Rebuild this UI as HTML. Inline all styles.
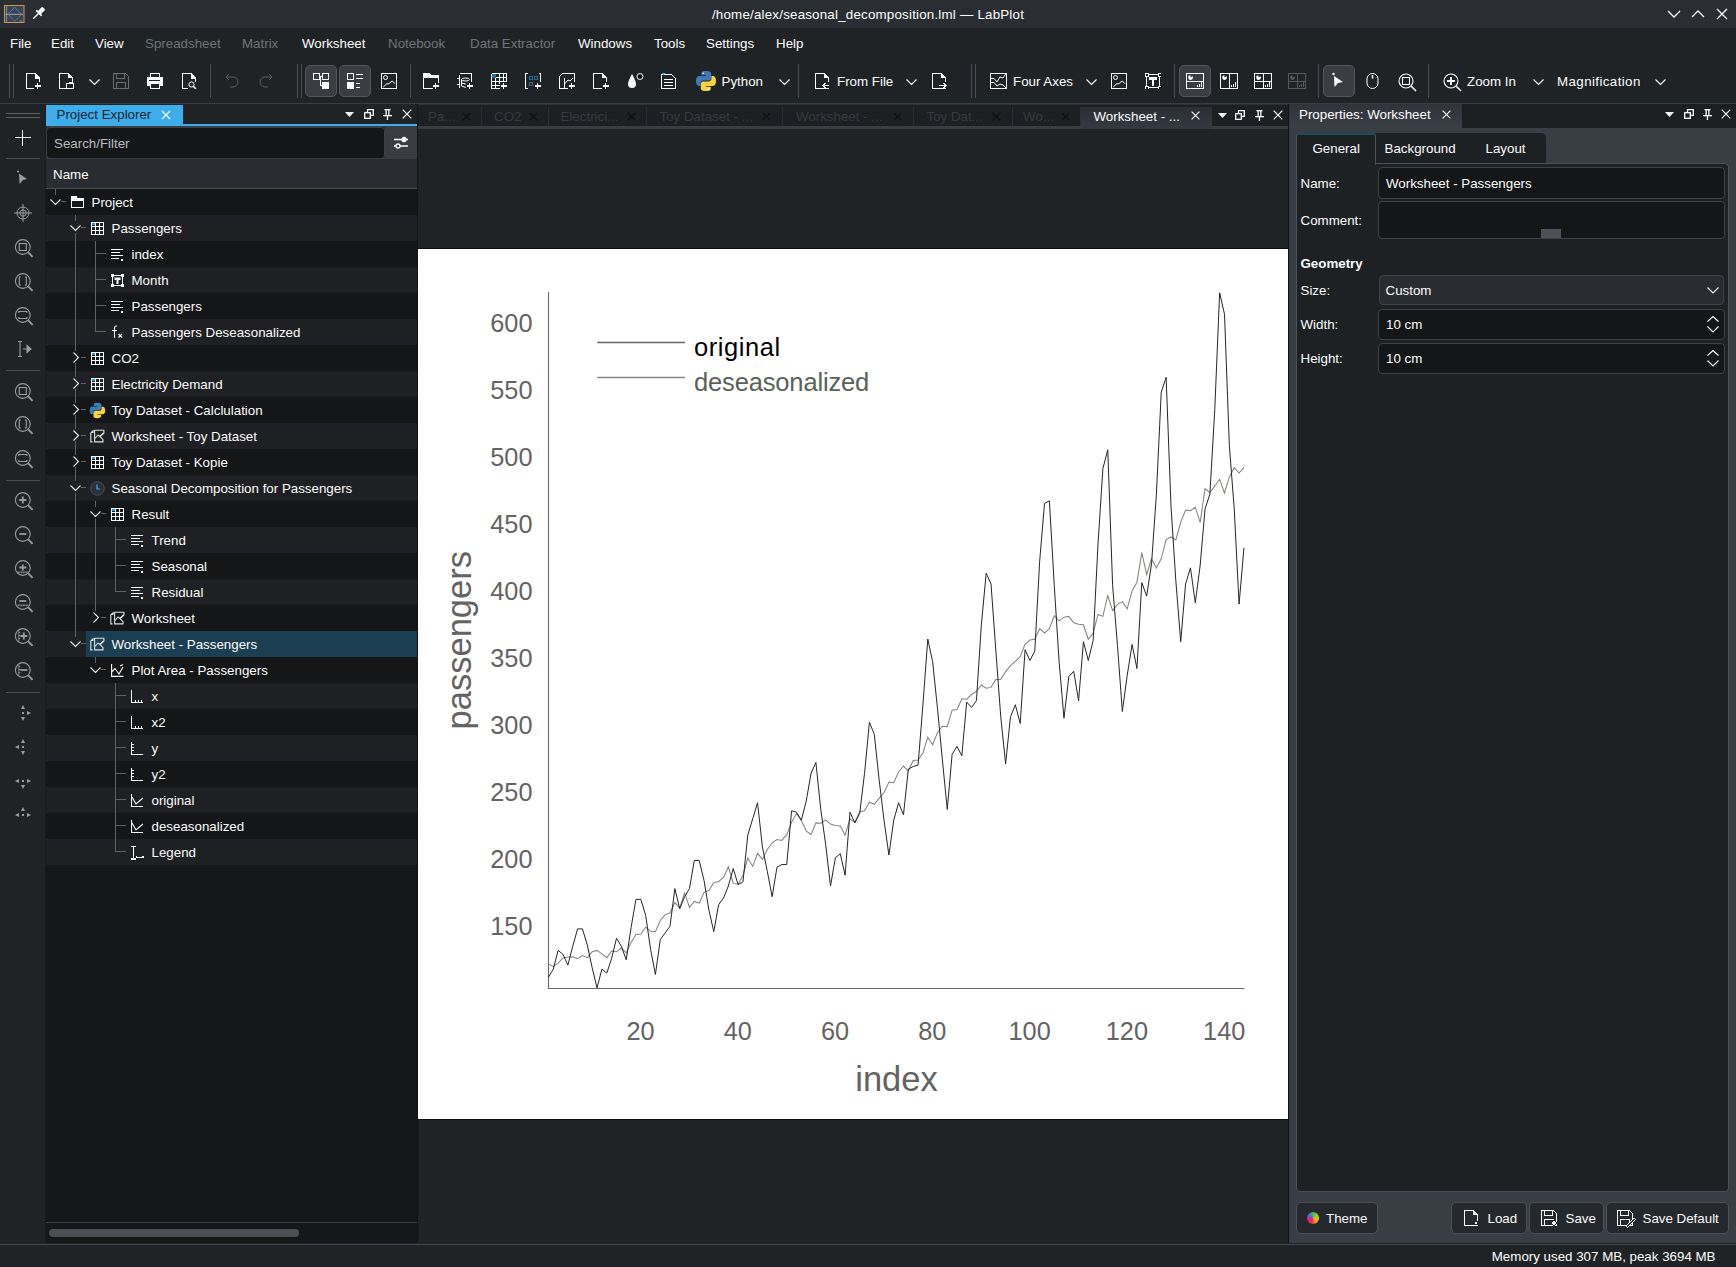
<!DOCTYPE html>
<html><head><meta charset="utf-8"><style>
html,body{margin:0;padding:0;}
body{width:1736px;height:1267px;position:relative;overflow:hidden;background:#202326;font-family:'Liberation Sans', sans-serif;}
body>div{position:absolute;}
.t{white-space:nowrap;line-height:1;}
</style></head><body>
<div style="left:0px;top:0px;width:1736px;height:28px;background:#2a2e32;"></div>
<svg style="position:absolute;left:4px;top:5px;" width="21" height="18" viewBox="0 0 21 18"><rect x="0.5" y="0.5" width="19.5" height="17" fill="#3b4350" stroke="#c9974f" stroke-width="1"/><path d="M2.6 1.2 V16.8" stroke="#a0a8b0" stroke-width="0.8"/><path d="M1.5 9.3 H19" stroke="#aab2ba" stroke-width="0.9"/><path d="M4 9.3 L10.7 2.2 L17.5 9.3" fill="none" stroke="#3f92d2" stroke-width="0.8"/><path d="M4 9.3 L10.7 16.2 L17.5 9.3" fill="none" stroke="#6f7882" stroke-width="0.8"/><path d="M15.5 16 H18.5" stroke="#3f92d2" stroke-width="1"/></svg>
<svg style="position:absolute;left:31px;top:6px;" width="15" height="15" viewBox="0 0 15 15"><g transform="rotate(45 7.5 7.5)" fill="#fcfcfc"><rect x="5.3" y="0" width="4.4" height="6.5" rx="0.8"/><rect x="3.6" y="6" width="7.8" height="1.8" rx="0.5"/><rect x="6.8" y="7.5" width="1.4" height="7.5"/></g></svg>
<div class="t" style="left:368.00px;width:1000px;text-align:center;top:7.92px;font-size:13.33px;color:#fcfcfc;font-weight:normal;letter-spacing:0.21px;">/home/alex/seasonal_decomposition.lml — LabPlot</div>
<svg style="position:absolute;left:1667px;top:8px;" width="14" height="12" viewBox="0 0 14 12"><path d="M1 3 L7 9 L13 3" fill="none" stroke="#fcfcfc" stroke-width="1.3"/></svg>
<svg style="position:absolute;left:1691px;top:8px;" width="14" height="12" viewBox="0 0 14 12"><path d="M1 9 L7 3 L13 9" fill="none" stroke="#fcfcfc" stroke-width="1.3"/></svg>
<svg style="position:absolute;left:1716px;top:8px;" width="12" height="12" viewBox="0 0 12 12"><path d="M1 1 L11 11 M11 1 L1 11" fill="none" stroke="#fcfcfc" stroke-width="1.3"/></svg>
<div style="left:0px;top:28px;width:1736px;height:30px;background:#202326;"></div>
<div class="t" style="left:10.00px;top:36.72px;font-size:13.33px;color:#fcfcfc;font-weight:normal;">File</div>
<div class="t" style="left:51.00px;top:36.72px;font-size:13.33px;color:#fcfcfc;font-weight:normal;">Edit</div>
<div class="t" style="left:95.00px;top:36.72px;font-size:13.33px;color:#fcfcfc;font-weight:normal;">View</div>
<div class="t" style="left:145.00px;top:36.72px;font-size:13.33px;color:#707376;font-weight:normal;">Spreadsheet</div>
<div class="t" style="left:242.00px;top:36.72px;font-size:13.33px;color:#707376;font-weight:normal;">Matrix</div>
<div class="t" style="left:302.00px;top:36.72px;font-size:13.33px;color:#fcfcfc;font-weight:normal;">Worksheet</div>
<div class="t" style="left:388.00px;top:36.72px;font-size:13.33px;color:#707376;font-weight:normal;">Notebook</div>
<div class="t" style="left:470.00px;top:36.72px;font-size:13.33px;color:#707376;font-weight:normal;">Data Extractor</div>
<div class="t" style="left:578.00px;top:36.72px;font-size:13.33px;color:#fcfcfc;font-weight:normal;">Windows</div>
<div class="t" style="left:654.00px;top:36.72px;font-size:13.33px;color:#fcfcfc;font-weight:normal;">Tools</div>
<div class="t" style="left:706.00px;top:36.72px;font-size:13.33px;color:#fcfcfc;font-weight:normal;">Settings</div>
<div class="t" style="left:776.00px;top:36.72px;font-size:13.33px;color:#fcfcfc;font-weight:normal;">Help</div>
<div style="left:0px;top:58px;width:1736px;height:45px;background:#202326;"></div>
<div style="left:0px;top:103px;width:1736px;height:1px;background:#3a3d41;"></div>
<div style="left:9px;top:64px;width:1px;height:34px;background:#4a4d51;"></div>
<div style="left:13px;top:64px;width:1px;height:34px;background:#4a4d51;"></div>
<svg style="position:absolute;left:25px;top:73px;" width="16" height="16" viewBox="0 0 16 16"><g fill="none" stroke="#fcfcfc" stroke-width="1" shape-rendering="crispEdges"><path d="M1.5 15.5 V0.5 H10 L14.5 5 V10 M1.5 15.5 H9"/><path d="M10 0 V5.5 H15 Z" fill="#fcfcfc" stroke="none"/><rect x="8.6" y="9.2" width="7.4" height="6.8" fill="#202326" stroke="none"/><path d="M9.5 13 H15.5 M12.5 10 V16" stroke-width="1.2"/></g></svg>
<svg style="position:absolute;left:59px;top:73px;" width="16" height="16" viewBox="0 0 16 16"><g fill="none" stroke="#fcfcfc" stroke-width="1" shape-rendering="crispEdges"><path d="M0.5 0.5 H9.5 L13.5 4.5 V15.5 H0.5 Z"/><path d="M9 0.5 H10 L14 4.5 V5 H9 Z" fill="#fcfcfc" stroke="none"/><rect x="7.5" y="10.5" width="7" height="5" fill="#202326"/><path d="M7.5 10.5 H10 L10.5 9.5 H12 V10.5 H14.5 V15.5 H7.5 Z"/></g></svg>
<svg style="position:absolute;left:89px;top:79px;" width="11" height="7" viewBox="0 0 11 7"><path d="M0.5 0.5 L5.5 5.5 L10.5 0.5" fill="none" stroke="#fcfcfc" stroke-width="1.1"/></svg>
<svg style="position:absolute;left:113px;top:73px;" width="16" height="16" viewBox="0 0 16 16"><g fill="none" stroke="#6a6d70" stroke-width="1" shape-rendering="crispEdges"><path d="M0.5 0.5 H12.5 L15.5 3.5 V15.5 H0.5 Z"/><rect x="3.5" y="0.5" width="8" height="5"/><rect x="3.5" y="9.5" width="9" height="6"/></g></svg>
<svg style="position:absolute;left:147px;top:73px;" width="16" height="16" viewBox="0 0 16 16"><g fill="none" stroke="#fcfcfc" stroke-width="1" shape-rendering="crispEdges"><rect x="3.5" y="0.5" width="9" height="4"/><path d="M0.5 4.5 H15.5 V12.5 H0.5 Z" fill="#fcfcfc"/><rect x="3.5" y="10.5" width="9" height="5" fill="#202326"/><path d="M2 7 H13" stroke="#202326"/></g></svg>
<svg style="position:absolute;left:181px;top:73px;" width="16" height="16" viewBox="0 0 16 16"><g fill="none" stroke="#fcfcfc" stroke-width="1" shape-rendering="crispEdges"><path d="M1.5 15.5 V0.5 H10 L14.5 5 V9 M1.5 15.5 H7"/><path d="M10 0 V5.5 H15 Z" fill="#fcfcfc" stroke="none"/><circle cx="10.5" cy="11.5" r="2.6" shape-rendering="auto"/><path d="M12.3 13.3 L15 16" stroke-width="1.4" shape-rendering="auto"/></g></svg>
<div style="left:210px;top:64px;width:1px;height:34px;background:#4a4d51;"></div>
<svg style="position:absolute;left:224px;top:73px;" width="16" height="16" viewBox="0 0 16 16"><path d="M2 4 L5 1 M2 4 L5 7 M2 4 H9 A5 5 0 0 1 9 14 H6" fill="none" stroke="#5a5d60" stroke-width="1"/></svg>
<svg style="position:absolute;left:258px;top:73px;" width="16" height="16" viewBox="0 0 16 16"><path d="M14 4 L11 1 M14 4 L11 7 M14 4 H7 A5 5 0 0 0 7 14 H10" fill="none" stroke="#5a5d60" stroke-width="1"/></svg>
<div style="left:297px;top:64px;width:1px;height:34px;background:#4a4d51;"></div>
<div style="left:301px;top:64px;width:1px;height:34px;background:#4a4d51;"></div>
<div style="left:305px;top:65px;width:32px;height:32px;background:#3a3d41;border:1px solid #54585c;border-radius:5px;box-sizing:border-box;"></div>
<svg style="position:absolute;left:313px;top:73px;" width="16" height="16" viewBox="0 0 16 16"><g fill="none" stroke="#fcfcfc" stroke-width="1" shape-rendering="crispEdges"><rect x="0.5" y="0.5" width="6" height="6"/><rect x="9.5" y="0.5" width="6" height="6"/><path d="M6.5 3.5 H9.5 M7.5 3.5 V12.5 H9.5"/><rect x="9" y="9" width="7" height="7" fill="#fcfcfc" stroke="none"/></g></svg>
<div style="left:339px;top:65px;width:32px;height:32px;background:#3a3d41;border:1px solid #54585c;border-radius:5px;box-sizing:border-box;"></div>
<svg style="position:absolute;left:347px;top:73px;" width="16" height="16" viewBox="0 0 16 16"><g fill="none" stroke="#fcfcfc" stroke-width="1" shape-rendering="crispEdges"><rect x="0.5" y="0.5" width="6" height="6"/><path d="M9 1.5 H16 M9 5.5 H16 M9 10.5 H13 M9 14.5 H13"/><rect x="0" y="9" width="7" height="7" fill="#fcfcfc" stroke="none"/></g></svg>
<svg style="position:absolute;left:381px;top:73px;" width="16" height="16" viewBox="0 0 16 16"><g fill="none" stroke="#fcfcfc" stroke-width="1" shape-rendering="crispEdges"><rect x="0.5" y="0.5" width="15" height="15"/><circle cx="4.5" cy="4.5" r="2" shape-rendering="auto"/><path d="M2.3 14 L6 10.5 L7 11.2 L11.3 8 L14 10.8" shape-rendering="auto"/></g></svg>
<div style="left:410px;top:64px;width:1px;height:34px;background:#4a4d51;"></div>
<svg style="position:absolute;left:423px;top:73px;" width="16" height="16" viewBox="0 0 16 16"><g fill="none" stroke="#fcfcfc" stroke-width="1" shape-rendering="crispEdges"><path d="M0.5 15.5 V0.5 H6 L8 2.5 H15.5 V10"/><path d="M0 0 H6 L8 2 H16 V5 H0 Z" fill="#fcfcfc" stroke="none"/><path d="M0.5 15.5 H10 M12.5 10 V16 M9.5 13 H15.5" stroke-width="1.2"/></g></svg>
<svg style="position:absolute;left:457px;top:73px;" width="16" height="16" viewBox="0 0 16 16"><g fill="none" stroke="#fcfcfc" stroke-width="1" shape-rendering="crispEdges"><path d="M2.5 1.5 V15 M2.5 0.5 H14.5 V9 M0 5 H2.5 M0 11 H2.5"/><ellipse cx="8.5" cy="6.5" rx="4" ry="1.5" shape-rendering="auto"/><path d="M4.5 6.5 V13 Q8.5 15 11 14 M4.5 10 Q8.5 12 12.5 10" shape-rendering="auto"/><rect x="8.6" y="9.2" width="7.4" height="6.8" fill="#202326" stroke="none"/><path d="M9.5 13 H15.5 M12.5 10 V16" stroke-width="1.2"/></g></svg>
<svg style="position:absolute;left:491px;top:73px;" width="16" height="16" viewBox="0 0 16 16"><g fill="none" stroke="#fcfcfc" stroke-width="1" shape-rendering="crispEdges"><path d="M0.5 0.5 H15.5 V9 M0.5 0.5 V15.5 H9 M4.5 0.5 V15.5 M8.5 0.5 V11 M12.5 0.5 V9 M0.5 4.5 H15.5 M0.5 8.5 H15.5 M0.5 12.5 H9"/><rect x="1" y="1" width="3.5" height="3.5" fill="#2e6a8f" stroke="none"/><rect x="8.6" y="9.2" width="7.4" height="6.8" fill="#202326" stroke="none"/><path d="M9.5 13 H15.5 M12.5 10 V16" stroke-width="1.2"/></g></svg>
<svg style="position:absolute;left:525px;top:73px;" width="16" height="16" viewBox="0 0 16 16"><g fill="none" stroke="#fcfcfc" stroke-width="1" shape-rendering="crispEdges"><path d="M2.5 0.5 H0.5 V15.5 H2.5 M13.5 0.5 H15.5 V9"/><rect x="4.5" y="3.5" width="3" height="3" stroke="#2e6a8f"/><rect x="9.5" y="3.5" width="3" height="3" stroke="#2e6a8f"/><rect x="4.5" y="9.5" width="3" height="3" stroke="#2e6a8f"/><rect x="8.6" y="9.2" width="7.4" height="6.8" fill="#202326" stroke="none"/><path d="M9.5 13 H15.5 M12.5 10 V16" stroke-width="1.2"/></g></svg>
<svg style="position:absolute;left:559px;top:73px;" width="16" height="16" viewBox="0 0 16 16"><g fill="none" stroke="#fcfcfc" stroke-width="1" shape-rendering="crispEdges"><path d="M0.5 15.5 V3.5 L3.5 0.5 H15.5 V9 M0.5 15.5 H9"/><path d="M5.5 5 V15.5 M5.5 11 L9 7 L11 8 L14 5" shape-rendering="auto"/><rect x="8.6" y="9.2" width="7.4" height="6.8" fill="#202326" stroke="none"/><path d="M9.5 13 H15.5 M12.5 10 V16" stroke-width="1.2"/></g></svg>
<svg style="position:absolute;left:593px;top:73px;" width="16" height="16" viewBox="0 0 16 16"><g fill="none" stroke="#fcfcfc" stroke-width="1" shape-rendering="crispEdges"><path d="M0.5 0.5 H9.5 L13.5 4.5 V15.5 H0.5 Z"/><path d="M9 0.5 H10 L14 4.5 V5 H9 Z" fill="#fcfcfc" stroke="none"/><rect x="8.6" y="9.2" width="7.4" height="6.8" fill="#202326" stroke="none"/><path d="M9.5 13 H15.5 M12.5 10 V16" stroke-width="1.2"/><rect x="10" y="11" width="6" height="5" fill="none" stroke="none"/></g></svg>
<svg style="position:absolute;left:627px;top:72px;" width="18" height="18" viewBox="0 0 18 18"><path d="M5 2 C3 6 1 9 1 12 A4 4 0 0 0 9 12 C9 9 7 6 5 2 Z" fill="#fcfcfc"/><circle cx="13" cy="4.5" r="3" fill="#000" stroke="#fcfcfc" stroke-width="1"/></svg>
<svg style="position:absolute;left:661px;top:73px;" width="16" height="16" viewBox="0 0 16 16"><g fill="none" stroke="#fcfcfc" stroke-width="1" shape-rendering="crispEdges"><path d="M0.5 1.5 H10.5 L14.5 5.5 V15.5 H0.5 Z"/><path d="M3 6.5 H12 M3 9.5 H12 M3 12.5 H12" stroke-width="1.3"/><path d="M0 0 H4 L2 2 Z" fill="#3daee9" stroke="none"/></g></svg>
<svg style="position:absolute;left:695px;top:70px;" width="22" height="22" viewBox="0 0 22 22"><path d="M10.8 1 C6 1 6.3 3.1 6.3 3.1 V5.3 H11 V6 H4.3 C4.3 6 1 5.7 1 10.9 C1 16 3.9 15.9 3.9 15.9 H5.6 V13.5 C5.6 13.5 5.5 10.6 8.5 10.6 H13.4 C13.4 10.6 16.2 10.6 16.2 7.9 V3.6 C16.2 3.6 16.6 1 10.8 1 Z" fill="#3d7ab8"/><path d="M11.2 21 C16 21 15.7 18.9 15.7 18.9 V16.7 H11 V16 H17.7 C17.7 16 21 16.3 21 11.1 C21 6 18.1 6.1 18.1 6.1 H16.4 V8.5 C16.4 8.5 16.5 11.4 13.5 11.4 H8.6 C8.6 11.4 5.8 11.4 5.8 14.1 V18.4 C5.8 18.4 5.4 21 11.2 21 Z" fill="#f5d33e"/><circle cx="8.2" cy="3.3" r="0.8" fill="#fff"/><circle cx="13.8" cy="18.7" r="0.8" fill="#fff"/></svg>
<div class="t" style="left:721.50px;top:74.72px;font-size:13.33px;color:#fcfcfc;font-weight:normal;">Python</div>
<svg style="position:absolute;left:779px;top:79px;" width="11" height="7" viewBox="0 0 11 7"><path d="M0.5 0.5 L5.5 5.5 L10.5 0.5" fill="none" stroke="#fcfcfc" stroke-width="1.1"/></svg>
<div style="left:798px;top:64px;width:1px;height:34px;background:#4a4d51;"></div>
<svg style="position:absolute;left:815px;top:73px;" width="16" height="16" viewBox="0 0 16 16"><g fill="none" stroke="#fcfcfc" stroke-width="1" shape-rendering="crispEdges"><path d="M0.5 0.5 H9.5 L13.5 4.5 V15.5 H0.5 Z"/><path d="M9 0.5 H10 L14 4.5 V5 H9 Z" fill="#fcfcfc" stroke="none"/><rect x="6" y="9" width="9" height="6" fill="#202326" stroke="none"/><path d="M14 12.5 H8 M10.5 10 L8 12.5 L10.5 15" /></g></svg>
<div class="t" style="left:837.00px;top:74.72px;font-size:13.33px;color:#fcfcfc;font-weight:normal;">From File</div>
<svg style="position:absolute;left:906px;top:79px;" width="11" height="7" viewBox="0 0 11 7"><path d="M0.5 0.5 L5.5 5.5 L10.5 0.5" fill="none" stroke="#fcfcfc" stroke-width="1.1"/></svg>
<svg style="position:absolute;left:932px;top:73px;" width="16" height="16" viewBox="0 0 16 16"><g fill="none" stroke="#fcfcfc" stroke-width="1" shape-rendering="crispEdges"><path d="M0.5 0.5 H9.5 L13.5 4.5 V15.5 H0.5 Z"/><path d="M9 0.5 H10 L14 4.5 V5 H9 Z" fill="#fcfcfc" stroke="none"/><rect x="6" y="9" width="9" height="6" fill="#202326" stroke="none"/><path d="M7 12.5 H14 M11.5 10 L14 12.5 L11.5 15" /></g></svg>
<div style="left:971px;top:64px;width:1px;height:34px;background:#4a4d51;"></div>
<div style="left:975px;top:64px;width:1px;height:34px;background:#4a4d51;"></div>
<svg style="position:absolute;left:990px;top:73px;" width="17" height="16" viewBox="0 0 17 16"><g fill="none" stroke="#fcfcfc" stroke-width="1" shape-rendering="crispEdges"><rect x="0.5" y="0.5" width="16" height="15"/><path d="M0.5 5.5 H4 L7 9 L10 4 L13 5 L16 0.5 M0.5 9.5 H4 L7 13 L10 11 L13 12 L16 15" shape-rendering="auto"/></g></svg>
<div class="t" style="left:1013.00px;top:74.72px;font-size:13.33px;color:#fcfcfc;font-weight:normal;">Four Axes</div>
<svg style="position:absolute;left:1086px;top:79px;" width="11" height="7" viewBox="0 0 11 7"><path d="M0.5 0.5 L5.5 5.5 L10.5 0.5" fill="none" stroke="#fcfcfc" stroke-width="1.1"/></svg>
<svg style="position:absolute;left:1111px;top:73px;" width="16" height="16" viewBox="0 0 16 16"><g fill="none" stroke="#fcfcfc" stroke-width="1" shape-rendering="crispEdges"><rect x="0.5" y="0.5" width="15" height="15"/><circle cx="4.5" cy="4.5" r="2" shape-rendering="auto"/><path d="M2.3 14 L6 10.5 L7 11.2 L11.3 8 L14 10.8" shape-rendering="auto"/></g></svg>
<svg style="position:absolute;left:1145px;top:73px;" width="16" height="16" viewBox="0 0 16 16"><g fill="none" stroke="#fcfcfc" stroke-width="1" shape-rendering="crispEdges"><rect x="1.5" y="1.5" width="13" height="13"/><rect x="0" y="0" width="3" height="3" fill="#202326"/><rect x="13" y="0" width="3" height="3" fill="#202326"/><rect x="0" y="13" width="3" height="3" fill="#202326"/><rect x="13" y="13" width="3" height="3" fill="#202326"/><path d="M4 4 H12 V6.5 H9.3 V12.5 H6.7 V6.5 H4 Z" fill="#fcfcfc" stroke="none"/></g></svg>
<div style="left:1174px;top:64px;width:1px;height:34px;background:#4a4d51;"></div>
<div style="left:1179px;top:65px;width:32px;height:32px;background:#3a3d41;border:1px solid #54585c;border-radius:5px;box-sizing:border-box;"></div>
<svg style="position:absolute;left:1186px;top:73px;" width="18" height="16" viewBox="0 0 18 16"><g fill="none" stroke="#fcfcfc" stroke-width="1" shape-rendering="crispEdges"><rect x="0.5" y="0.5" width="17" height="15"/><path d="M0.5 8 H17.5"/><path d="M4.5 4.5 L6.5 3.3 A2.3 2.3 0 1 1 4.5 2.2 Z" fill="#fcfcfc" stroke="none" shape-rendering="auto"/><path d="M11.5 14 V12 M13.5 14 V10.5 M15.5 14 V9" stroke-width="1.3"/></g></svg>
<svg style="position:absolute;left:1220px;top:73px;" width="18" height="16" viewBox="0 0 18 16"><g fill="none" stroke="#fcfcfc" stroke-width="1" shape-rendering="crispEdges"><rect x="0.5" y="0.5" width="17" height="15"/><path d="M9 0.5 V15.5"/><path d="M4.5 4.5 L6.5 3.3 A2.3 2.3 0 1 1 4.5 2.2 Z" fill="#fcfcfc" stroke="none" shape-rendering="auto"/><path d="M11.5 14 V12 M13.5 14 V10.5 M15.5 14 V9" stroke-width="1.3"/></g></svg>
<svg style="position:absolute;left:1254px;top:73px;" width="18" height="16" viewBox="0 0 18 16"><g fill="none" stroke="#fcfcfc" stroke-width="1" shape-rendering="crispEdges"><rect x="0.5" y="0.5" width="17" height="15"/><path d="M0.5 8 H17.5 M9 0.5 V15.5"/><path d="M4.5 4.5 L6.5 3.3 A2.3 2.3 0 1 1 4.5 2.2 Z" fill="#fcfcfc" stroke="none" shape-rendering="auto"/><path d="M11.5 14 V12 M13.5 14 V10.5 M15.5 14 V9" stroke-width="1.3"/></g></svg>
<svg style="position:absolute;left:1288px;top:73px;" width="18" height="16" viewBox="0 0 18 16"><g fill="none" stroke="#56595c" stroke-width="1" shape-rendering="crispEdges"><rect x="0.5" y="0.5" width="17" height="15"/><path d="M0.5 8 H17.5 M9 0.5 V15.5"/><path d="M4.5 4.5 L6.5 3.3 A2.3 2.3 0 1 1 4.5 2.2 Z" fill="#56595c" stroke="none" shape-rendering="auto"/><path d="M11.5 14 V12 M13.5 14 V10.5 M15.5 14 V9" stroke-width="1.3"/></g></svg>
<div style="left:1318px;top:64px;width:1px;height:34px;background:#4a4d51;"></div>
<div style="left:1323px;top:65px;width:32px;height:32px;background:#3a3d41;border:1px solid #54585c;border-radius:5px;box-sizing:border-box;"></div>
<svg style="position:absolute;left:1331px;top:72px;" width="16" height="18" viewBox="0 0 16 18"><circle cx="2.5" cy="2" r="1.2" fill="#fcfcfc"/><path d="M3 4 L12 10 L7 11 L3.5 15 Z" fill="#fcfcfc"/></svg>
<svg style="position:absolute;left:1366px;top:73px;" width="13" height="16" viewBox="0 0 13 16"><rect x="1" y="0.5" width="11" height="15" rx="5.5" fill="none" stroke="#fcfcfc" stroke-width="1"/><path d="M6.5 2 V5.5" stroke="#fcfcfc" stroke-width="1.5"/></svg>
<svg style="position:absolute;left:1398px;top:73px;" width="20" height="19" viewBox="0 0 20 19"><circle cx="8" cy="8" r="7" fill="none" stroke="#fcfcfc" stroke-width="1.1"/><rect x="4.5" y="4.5" width="7" height="7" fill="none" stroke="#fcfcfc" stroke-width="1.1"/><path d="M13 13 L18 18" stroke="#fcfcfc" stroke-width="1.6"/></svg>
<div style="left:1428px;top:64px;width:1px;height:34px;background:#4a4d51;"></div>
<svg style="position:absolute;left:1443px;top:73px;" width="20" height="19" viewBox="0 0 20 19"><circle cx="8" cy="8" r="7" fill="none" stroke="#fcfcfc" stroke-width="1.1"/><path d="M8 4 V12 M4 8 H12" stroke="#fcfcfc" stroke-width="1.8"/><path d="M13 13 L18 18" stroke="#fcfcfc" stroke-width="1.6"/></svg>
<div class="t" style="left:1467.00px;top:74.72px;font-size:13.33px;color:#fcfcfc;font-weight:normal;">Zoom In</div>
<svg style="position:absolute;left:1533px;top:79px;" width="11" height="7" viewBox="0 0 11 7"><path d="M0.5 0.5 L5.5 5.5 L10.5 0.5" fill="none" stroke="#fcfcfc" stroke-width="1.1"/></svg>
<div class="t" style="left:1557.00px;top:74.72px;font-size:13.33px;color:#fcfcfc;font-weight:normal;letter-spacing:0.4px;">Magnification</div>
<svg style="position:absolute;left:1655px;top:79px;" width="11" height="7" viewBox="0 0 11 7"><path d="M0.5 0.5 L5.5 5.5 L10.5 0.5" fill="none" stroke="#fcfcfc" stroke-width="1.1"/></svg>
<div style="left:0px;top:104px;width:45px;height:1139px;background:#202326;"></div>
<div style="left:45px;top:104px;width:1px;height:1139px;background:#17191b;"></div>
<div style="left:6px;top:113px;width:34px;height:1px;background:#5c5f62;"></div>
<div style="left:6px;top:117px;width:34px;height:1px;background:#5c5f62;"></div>
<svg style="position:absolute;left:15px;top:130px;" width="16" height="16" viewBox="0 0 16 16"><path d="M7.5 0 V16 M0 7.5 H16" stroke="#fcfcfc" stroke-width="1"/></svg>
<div style="left:6px;top:158px;width:34px;height:1px;background:#4a4d51;"></div>
<svg style="position:absolute;left:16px;top:170px;" width="16" height="17" viewBox="0 0 16 17"><circle cx="2" cy="1.5" r="1.1" fill="#9a9c9e"/><path d="M3 3.5 L11 9 L7 10 L3.5 14 Z" fill="#9a9c9e"/></svg>
<svg style="position:absolute;left:14px;top:204px;" width="18" height="18" viewBox="0 0 18 18"><g fill="none" stroke="#9a9c9e" stroke-width="1"><circle cx="9" cy="9" r="6"/><circle cx="9" cy="9" r="3.2"/><path d="M9 0 V18 M0 9 H18"/></g></svg>
<svg style="position:absolute;left:14px;top:238px;" width="20" height="20" viewBox="0 0 20 20"><g fill="none" stroke="#9a9c9e" stroke-width="1.1"><circle cx="8.8" cy="9" r="7.4"/><path d="M14.2 14.4 L18.6 18.8" stroke-width="1.9"/><g transform="translate(1.3 1.5)"><rect x="4" y="4" width="7" height="7"/></g></g></svg>
<svg style="position:absolute;left:14px;top:272px;" width="20" height="20" viewBox="0 0 20 20"><g fill="none" stroke="#9a9c9e" stroke-width="1.1"><circle cx="8.8" cy="9" r="7.4"/><path d="M14.2 14.4 L18.6 18.8" stroke-width="1.9"/><g transform="translate(1.3 1.5)"><path d="M5.5 3.5 H4 V11.5 H5.5 M9.5 3.5 H11 V11.5 H9.5" stroke-width="1.1"/></g></g></svg>
<svg style="position:absolute;left:14px;top:306px;" width="20" height="20" viewBox="0 0 20 20"><g fill="none" stroke="#9a9c9e" stroke-width="1.1"><circle cx="8.8" cy="9" r="7.4"/><path d="M14.2 14.4 L18.6 18.8" stroke-width="1.9"/><g transform="translate(1.3 1.5)"><path d="M3.5 5.5 V4 H11.5 V5.5 M3.5 9.5 V11 H11.5 V9.5" stroke-width="1.1"/></g></g></svg>
<svg style="position:absolute;left:15px;top:341px;" width="18" height="17" viewBox="0 0 18 17"><g fill="none" stroke="#9a9c9e" stroke-width="1.1"><path d="M3 0.5 H7 M5 0.5 V15.5 M3 15.5 H7 M8 8 H13"/><path d="M12 4.5 L16 8 L12 11.5 Z" fill="#9a9c9e"/></g></svg>
<div style="left:6px;top:370px;width:34px;height:1px;background:#4a4d51;"></div>
<svg style="position:absolute;left:14px;top:382px;" width="20" height="20" viewBox="0 0 20 20"><g fill="none" stroke="#9a9c9e" stroke-width="1.1"><circle cx="8.8" cy="9" r="7.4"/><path d="M14.2 14.4 L18.6 18.8" stroke-width="1.9"/><g transform="translate(1.3 1.5)"><rect x="4" y="4" width="7" height="7"/></g></g></svg>
<svg style="position:absolute;left:14px;top:415px;" width="20" height="20" viewBox="0 0 20 20"><g fill="none" stroke="#9a9c9e" stroke-width="1.1"><circle cx="8.8" cy="9" r="7.4"/><path d="M14.2 14.4 L18.6 18.8" stroke-width="1.9"/><g transform="translate(1.3 1.5)"><path d="M5.5 3.5 H4 V11.5 H5.5 M9.5 3.5 H11 V11.5 H9.5" stroke-width="1.1"/></g></g></svg>
<svg style="position:absolute;left:14px;top:449px;" width="20" height="20" viewBox="0 0 20 20"><g fill="none" stroke="#9a9c9e" stroke-width="1.1"><circle cx="8.8" cy="9" r="7.4"/><path d="M14.2 14.4 L18.6 18.8" stroke-width="1.9"/><g transform="translate(1.3 1.5)"><path d="M3.5 5.5 V4 H11.5 V5.5 M3.5 9.5 V11 H11.5 V9.5" stroke-width="1.1"/></g></g></svg>
<div style="left:6px;top:480px;width:34px;height:1px;background:#4a4d51;"></div>
<svg style="position:absolute;left:14px;top:491px;" width="20" height="20" viewBox="0 0 20 20"><g fill="none" stroke="#9a9c9e" stroke-width="1.1"><circle cx="8.8" cy="9" r="7.4"/><path d="M14.2 14.4 L18.6 18.8" stroke-width="1.9"/><g transform="translate(1.3 1.5)"><path d="M7.5 4 V11 M4 7.5 H11" stroke-width="1.8"/></g></g></svg>
<svg style="position:absolute;left:14px;top:525px;" width="20" height="20" viewBox="0 0 20 20"><g fill="none" stroke="#9a9c9e" stroke-width="1.1"><circle cx="8.8" cy="9" r="7.4"/><path d="M14.2 14.4 L18.6 18.8" stroke-width="1.9"/><g transform="translate(1.3 1.5)"><path d="M4 7.5 H11" stroke-width="1.8"/></g></g></svg>
<svg style="position:absolute;left:14px;top:559px;" width="20" height="20" viewBox="0 0 20 20"><g fill="none" stroke="#9a9c9e" stroke-width="1.1"><circle cx="8.8" cy="9" r="7.4"/><path d="M14.2 14.4 L18.6 18.8" stroke-width="1.9"/><g transform="translate(1.3 1.5)"><path d="M7.5 4 V10 M4 7 H11" stroke-width="1.8"/><path d="M2 11.5 H13 M3.5 11.5 V13 M6 11.5 V13 M8.5 11.5 V13 M11 11.5 V13" stroke-width="0.8"/></g></g></svg>
<svg style="position:absolute;left:14px;top:593px;" width="20" height="20" viewBox="0 0 20 20"><g fill="none" stroke="#9a9c9e" stroke-width="1.1"><circle cx="8.8" cy="9" r="7.4"/><path d="M14.2 14.4 L18.6 18.8" stroke-width="1.9"/><g transform="translate(1.3 1.5)"><path d="M4 6.5 H11" stroke-width="1.8"/><path d="M2 10.5 H13 M3.5 10.5 V12 M6 10.5 V12 M8.5 10.5 V12 M11 10.5 V12" stroke-width="0.8"/></g></g></svg>
<svg style="position:absolute;left:14px;top:627px;" width="20" height="20" viewBox="0 0 20 20"><g fill="none" stroke="#9a9c9e" stroke-width="1.1"><circle cx="8.8" cy="9" r="7.4"/><path d="M14.2 14.4 L18.6 18.8" stroke-width="1.9"/><g transform="translate(1.3 1.5)"><path d="M8.5 4 V11 M5 7.5 H12" stroke-width="1.8"/><path d="M3.5 2 V13 M3.5 4 H5 M3.5 7 H5 M3.5 10 H5" stroke-width="0.8"/></g></g></svg>
<svg style="position:absolute;left:14px;top:661px;" width="20" height="20" viewBox="0 0 20 20"><g fill="none" stroke="#9a9c9e" stroke-width="1.1"><circle cx="8.8" cy="9" r="7.4"/><path d="M14.2 14.4 L18.6 18.8" stroke-width="1.9"/><g transform="translate(1.3 1.5)"><path d="M5 7.5 H12" stroke-width="1.8"/><path d="M3.5 2 V13 M3.5 4 H5 M3.5 7 H5 M3.5 10 H5" stroke-width="0.8"/></g></g></svg>
<div style="left:6px;top:692px;width:34px;height:1px;background:#4a4d51;"></div>
<svg style="position:absolute;left:15px;top:705px;" width="16" height="16" viewBox="0 0 16 16"><g fill="#9a9c9e" shape-rendering="auto"><rect x="7" y="7" width="2" height="2"/><path d="M6 4 H10 L8 0 Z"/><path d="M6 12 H10 L8 16 Z"/><path d="M12 6 V10 L16 8 Z"/></g></svg>
<svg style="position:absolute;left:15px;top:739px;" width="16" height="16" viewBox="0 0 16 16"><g fill="#9a9c9e" shape-rendering="auto"><rect x="7" y="7" width="2" height="2"/><path d="M6 4 H10 L8 0 Z"/><path d="M6 12 H10 L8 16 Z"/><path d="M4 6 V10 L0 8 Z"/></g></svg>
<svg style="position:absolute;left:15px;top:773px;" width="16" height="16" viewBox="0 0 16 16"><g fill="#9a9c9e" shape-rendering="auto"><rect x="7" y="7" width="2" height="2"/><path d="M6 12 H10 L8 16 Z"/><path d="M4 6 V10 L0 8 Z"/><path d="M12 6 V10 L16 8 Z"/></g></svg>
<svg style="position:absolute;left:15px;top:807px;" width="16" height="16" viewBox="0 0 16 16"><g fill="#9a9c9e" shape-rendering="auto"><rect x="7" y="7" width="2" height="2"/><path d="M6 4 H10 L8 0 Z"/><path d="M4 6 V10 L0 8 Z"/><path d="M12 6 V10 L16 8 Z"/></g></svg>
<div style="left:46px;top:104px;width:371px;height:23px;background:#202326;"></div>
<div style="left:46px;top:105px;width:137px;height:21px;background:#3daee9;"></div>
<div class="t" style="left:56.50px;top:107.72px;font-size:13.33px;color:#1b2530;font-weight:normal;">Project Explorer</div>
<svg style="position:absolute;left:161px;top:110px;" width="10" height="10" viewBox="0 0 10 10"><path d="M1 1 L9 9 M9 1 L1 9" stroke="#fcfcfc" stroke-width="1.2"/></svg>
<div style="left:46px;top:124px;width:371px;height:2px;background:#3daee9;"></div>
<svg style="position:absolute;left:345px;top:112px;" width="9" height="5" viewBox="0 0 9 5"><path d="M0 0 H9 L4.5 5 Z" fill="#fcfcfc"/></svg>
<svg style="position:absolute;left:364px;top:109px;" width="10" height="10" viewBox="0 0 10 10"><g fill="none" stroke="#fcfcfc" stroke-width="1.3"><rect x="0.7" y="3.7" width="5.6" height="5.6"/><path d="M3.5 3.5 V0.7 H9.3 V6.3 H6.5"/></g></svg>
<svg style="position:absolute;left:383px;top:109px;" width="9" height="11" viewBox="0 0 9 11"><g fill="#fcfcfc"><rect x="1.5" y="0" width="6" height="1.3"/><rect x="2.5" y="0" width="1.3" height="7"/><rect x="5.2" y="0" width="1.3" height="7"/><rect x="0" y="6" width="9" height="1.3"/><rect x="3.8" y="7" width="1.3" height="4"/></g></svg>
<svg style="position:absolute;left:402px;top:109px;" width="10" height="10" viewBox="0 0 10 10"><path d="M0.7 0.7 L9.3 9.3 M9.3 0.7 L0.7 9.3" stroke="#fcfcfc" stroke-width="1.2"/></svg>
<div style="left:46px;top:126px;width:371px;height:1px;background:#3a3e42;"></div>
<div style="left:46px;top:127px;width:371px;height:32px;background:#2a2e32;"></div>
<div style="left:46px;top:127px;width:339px;height:32px;background:#141618;border:1px solid #3c4044;border-radius:4px;box-sizing:border-box;"></div>
<div class="t" style="left:54.00px;top:136.72px;font-size:13.33px;color:#b9bbbd;font-weight:normal;">Search/Filter</div>
<div style="left:385px;top:127px;width:32px;height:32px;background:#393d43;"></div>
<svg style="position:absolute;left:393px;top:136px;" width="16" height="14" viewBox="0 0 16 14"><g stroke="#fcfcfc" stroke-width="1.3" fill="#fcfcfc"><path d="M1 3.5 H15 M1 10 H15"/><circle cx="11" cy="3.5" r="2"/><circle cx="5" cy="10" r="2" fill="#393d43"/></g></svg>
<div style="left:46px;top:158px;width:371px;height:1px;background:#3a3e42;"></div>
<div style="left:46px;top:159px;width:371px;height:29px;background:#292c30;"></div>
<div class="t" style="left:53.00px;top:167.72px;font-size:13.33px;color:#fcfcfc;font-weight:normal;">Name</div>
<div style="left:46px;top:188px;width:371px;height:1px;background:#4a4d50;"></div>
<div style="left:46px;top:189px;width:371px;height:1033px;background:#161719;"></div>
<div style="left:46px;top:189px;width:371px;height:26px;background:#141618;"></div>
<div style="left:55px;top:189px;width:1px;height:6px;background:#5f6265;"></div>
<div style="left:61px;top:201px;width:5px;height:1px;background:#5f6265;"></div>
<svg style="position:absolute;left:50px;top:199px;" width="11" height="7" viewBox="0 0 11 7"><path d="M0.5 0.5 L5.5 5.5 L10.5 0.5" fill="none" stroke="#eff0f1" stroke-width="1.1"/></svg>
<svg style="position:absolute;left:71px;top:196px;" width="13" height="12" viewBox="0 0 13 12"><g fill="none" stroke="#fcfcfc" stroke-width="1.2" shape-rendering="crispEdges"><path d="M0.6 11.4 V0.6 H5 L6.5 2.6 H12.4 V11.4 Z M0.6 4 H12.4"/></g><path d="M0 0 H5 L6.5 2 V4 H0 Z" fill="#fcfcfc"/></svg>
<div class="t" style="left:91.50px;top:196.32px;font-size:13.33px;color:#fcfcfc;font-weight:normal;">Project</div>
<div style="left:46px;top:215px;width:371px;height:26px;background:#1e2023;"></div>
<div style="left:75px;top:215px;width:1px;height:6px;background:#5f6265;"></div>
<div style="left:75px;top:233px;width:1px;height:8px;background:#5f6265;"></div>
<div style="left:81px;top:227px;width:5px;height:1px;background:#5f6265;"></div>
<svg style="position:absolute;left:70px;top:225px;" width="11" height="7" viewBox="0 0 11 7"><path d="M0.5 0.5 L5.5 5.5 L10.5 0.5" fill="none" stroke="#eff0f1" stroke-width="1.1"/></svg>
<svg style="position:absolute;left:91px;top:222px;" width="13" height="13" viewBox="0 0 13 13"><g fill="#fcfcfc"><rect x="0" y="0" width="13" height="1"/><rect x="0" y="12" width="13" height="1"/><rect x="0" y="0" width="1" height="13"/><rect x="12" y="0" width="1" height="13"/><rect x="4" y="0" width="1" height="13"/><rect x="8" y="0" width="1" height="13"/><rect x="0" y="4" width="13" height="1"/><rect x="0" y="8" width="13" height="1"/></g><rect x="1" y="1" width="3" height="2" fill="#1d99f3"/></svg>
<div class="t" style="left:111.50px;top:222.32px;font-size:13.33px;color:#fcfcfc;font-weight:normal;">Passengers</div>
<div style="left:46px;top:241px;width:371px;height:26px;background:#141618;"></div>
<div style="left:75px;top:241px;width:1px;height:26px;background:#5f6265;"></div>
<div style="left:95px;top:241px;width:1px;height:26px;background:#5f6265;"></div>
<div style="left:95px;top:253px;width:11px;height:1px;background:#5f6265;"></div>
<svg style="position:absolute;left:111px;top:248px;" width="13" height="13" viewBox="0 0 13 13"><g stroke="#fcfcfc" stroke-width="1.2" shape-rendering="crispEdges"><path d="M0 1.5 H12 M0 4.5 H9 M0 7.5 H12 M0 10.5 H8 M10 12 H12"/></g></svg>
<div class="t" style="left:131.50px;top:248.32px;font-size:13.33px;color:#fcfcfc;font-weight:normal;">index</div>
<div style="left:46px;top:267px;width:371px;height:26px;background:#1e2023;"></div>
<div style="left:75px;top:267px;width:1px;height:26px;background:#5f6265;"></div>
<div style="left:95px;top:267px;width:1px;height:26px;background:#5f6265;"></div>
<div style="left:95px;top:279px;width:11px;height:1px;background:#5f6265;"></div>
<svg style="position:absolute;left:111px;top:274px;" width="13" height="13" viewBox="0 0 13 13"><g fill="none" stroke="#fcfcfc" stroke-width="1.2" shape-rendering="crispEdges"><rect x="1.5" y="1.5" width="10" height="10"/></g><g fill="#fcfcfc"><rect x="0" y="0" width="3" height="3"/><rect x="10" y="0" width="3" height="3"/><rect x="0" y="10" width="3" height="3"/><rect x="10" y="10" width="3" height="3"/><path d="M3.5 3.5 H9.5 V6 H7.5 V10 H5.5 V6 H3.5 Z"/></g></svg>
<div class="t" style="left:131.50px;top:274.32px;font-size:13.33px;color:#fcfcfc;font-weight:normal;">Month</div>
<div style="left:46px;top:293px;width:371px;height:26px;background:#141618;"></div>
<div style="left:75px;top:293px;width:1px;height:26px;background:#5f6265;"></div>
<div style="left:95px;top:293px;width:1px;height:26px;background:#5f6265;"></div>
<div style="left:95px;top:305px;width:11px;height:1px;background:#5f6265;"></div>
<svg style="position:absolute;left:111px;top:300px;" width="13" height="13" viewBox="0 0 13 13"><g stroke="#fcfcfc" stroke-width="1.2" shape-rendering="crispEdges"><path d="M0 1.5 H12 M0 4.5 H9 M0 7.5 H12 M0 10.5 H8 M10 12 H12"/></g></svg>
<div class="t" style="left:131.50px;top:300.32px;font-size:13.33px;color:#fcfcfc;font-weight:normal;">Passengers</div>
<div style="left:46px;top:319px;width:371px;height:26px;background:#1e2023;"></div>
<div style="left:75px;top:319px;width:1px;height:26px;background:#5f6265;"></div>
<div style="left:95px;top:319px;width:1px;height:13px;background:#5f6265;"></div>
<div style="left:95px;top:331px;width:11px;height:1px;background:#5f6265;"></div>
<svg style="position:absolute;left:111px;top:325px;" width="13" height="14" viewBox="0 0 13 14"><g fill="none" stroke="#fcfcfc" stroke-width="1.1"><path d="M6 1 H5 Q3.5 1 3.5 3 V13 M1 5.5 H6"/><path d="M7.5 9 L11 12.5 M11 9 L7.5 12.5" stroke-width="1.2"/></g></svg>
<div class="t" style="left:131.50px;top:326.32px;font-size:13.33px;color:#fcfcfc;font-weight:normal;">Passengers Deseasonalized</div>
<div style="left:46px;top:345px;width:371px;height:26px;background:#141618;"></div>
<div style="left:75px;top:345px;width:1px;height:6px;background:#5f6265;"></div>
<div style="left:75px;top:363px;width:1px;height:8px;background:#5f6265;"></div>
<div style="left:81px;top:357px;width:5px;height:1px;background:#5f6265;"></div>
<svg style="position:absolute;left:73px;top:352px;" width="7" height="11" viewBox="0 0 7 11"><path d="M0.5 0.5 L5.5 5.5 L0.5 10.5" fill="none" stroke="#eff0f1" stroke-width="1.1"/></svg>
<svg style="position:absolute;left:91px;top:352px;" width="13" height="13" viewBox="0 0 13 13"><g fill="#fcfcfc"><rect x="0" y="0" width="13" height="1"/><rect x="0" y="12" width="13" height="1"/><rect x="0" y="0" width="1" height="13"/><rect x="12" y="0" width="1" height="13"/><rect x="4" y="0" width="1" height="13"/><rect x="8" y="0" width="1" height="13"/><rect x="0" y="4" width="13" height="1"/><rect x="0" y="8" width="13" height="1"/></g><rect x="1" y="1" width="3" height="2" fill="#1d99f3"/></svg>
<div class="t" style="left:111.50px;top:352.32px;font-size:13.33px;color:#fcfcfc;font-weight:normal;">CO2</div>
<div style="left:46px;top:371px;width:371px;height:26px;background:#1e2023;"></div>
<div style="left:75px;top:371px;width:1px;height:6px;background:#5f6265;"></div>
<div style="left:75px;top:389px;width:1px;height:8px;background:#5f6265;"></div>
<div style="left:81px;top:383px;width:5px;height:1px;background:#5f6265;"></div>
<svg style="position:absolute;left:73px;top:378px;" width="7" height="11" viewBox="0 0 7 11"><path d="M0.5 0.5 L5.5 5.5 L0.5 10.5" fill="none" stroke="#eff0f1" stroke-width="1.1"/></svg>
<svg style="position:absolute;left:91px;top:378px;" width="13" height="13" viewBox="0 0 13 13"><g fill="#fcfcfc"><rect x="0" y="0" width="13" height="1"/><rect x="0" y="12" width="13" height="1"/><rect x="0" y="0" width="1" height="13"/><rect x="12" y="0" width="1" height="13"/><rect x="4" y="0" width="1" height="13"/><rect x="8" y="0" width="1" height="13"/><rect x="0" y="4" width="13" height="1"/><rect x="0" y="8" width="13" height="1"/></g><rect x="1" y="1" width="3" height="2" fill="#1d99f3"/></svg>
<div class="t" style="left:111.50px;top:378.32px;font-size:13.33px;color:#fcfcfc;font-weight:normal;">Electricity Demand</div>
<div style="left:46px;top:397px;width:371px;height:26px;background:#141618;"></div>
<div style="left:75px;top:397px;width:1px;height:6px;background:#5f6265;"></div>
<div style="left:75px;top:415px;width:1px;height:8px;background:#5f6265;"></div>
<div style="left:81px;top:409px;width:5px;height:1px;background:#5f6265;"></div>
<svg style="position:absolute;left:73px;top:404px;" width="7" height="11" viewBox="0 0 7 11"><path d="M0.5 0.5 L5.5 5.5 L0.5 10.5" fill="none" stroke="#eff0f1" stroke-width="1.1"/></svg>
<svg style="position:absolute;left:89px;top:402px;" width="17" height="17" viewBox="0 0 17 17"><g transform="scale(0.77)"><path d="M10.8 1 C6 1 6.3 3.1 6.3 3.1 V5.3 H11 V6 H4.3 C4.3 6 1 5.7 1 10.9 C1 16 3.9 15.9 3.9 15.9 H5.6 V13.5 C5.6 13.5 5.5 10.6 8.5 10.6 H13.4 C13.4 10.6 16.2 10.6 16.2 7.9 V3.6 C16.2 3.6 16.6 1 10.8 1 Z" fill="#3d7ab8"/><path d="M11.2 21 C16 21 15.7 18.9 15.7 18.9 V16.7 H11 V16 H17.7 C17.7 16 21 16.3 21 11.1 C21 6 18.1 6.1 18.1 6.1 H16.4 V8.5 C16.4 8.5 16.5 11.4 13.5 11.4 H8.6 C8.6 11.4 5.8 11.4 5.8 14.1 V18.4 C5.8 18.4 5.4 21 11.2 21 Z" fill="#f5d33e"/></g></svg>
<div class="t" style="left:111.50px;top:404.32px;font-size:13.33px;color:#fcfcfc;font-weight:normal;">Toy Dataset - Calclulation</div>
<div style="left:46px;top:423px;width:371px;height:26px;background:#1e2023;"></div>
<div style="left:75px;top:423px;width:1px;height:6px;background:#5f6265;"></div>
<div style="left:75px;top:441px;width:1px;height:8px;background:#5f6265;"></div>
<div style="left:81px;top:435px;width:5px;height:1px;background:#5f6265;"></div>
<svg style="position:absolute;left:73px;top:430px;" width="7" height="11" viewBox="0 0 7 11"><path d="M0.5 0.5 L5.5 5.5 L0.5 10.5" fill="none" stroke="#eff0f1" stroke-width="1.1"/></svg>
<svg style="position:absolute;left:90px;top:429px;" width="15" height="14" viewBox="0 0 15 14"><g fill="none" stroke="#e0e0e0" stroke-width="1.1" stroke-linejoin="round"><path d="M2.6 12.9 H0.8 V4 L3.5 1.3"/><path d="M4.6 12.9 V1.3 H13.9 V4 L10 7.6 L13 10.6 V12.9 Z"/><path d="M5 9.5 L8 6 L10 7.5 L13.5 4"/></g><path d="M0.8 4 L3.5 1.3 V4 Z" fill="#e0e0e0"/></svg>
<div class="t" style="left:111.50px;top:430.32px;font-size:13.33px;color:#fcfcfc;font-weight:normal;">Worksheet - Toy Dataset</div>
<div style="left:46px;top:449px;width:371px;height:26px;background:#141618;"></div>
<div style="left:75px;top:449px;width:1px;height:6px;background:#5f6265;"></div>
<div style="left:75px;top:467px;width:1px;height:8px;background:#5f6265;"></div>
<div style="left:81px;top:461px;width:5px;height:1px;background:#5f6265;"></div>
<svg style="position:absolute;left:73px;top:456px;" width="7" height="11" viewBox="0 0 7 11"><path d="M0.5 0.5 L5.5 5.5 L0.5 10.5" fill="none" stroke="#eff0f1" stroke-width="1.1"/></svg>
<svg style="position:absolute;left:91px;top:456px;" width="13" height="13" viewBox="0 0 13 13"><g fill="#fcfcfc"><rect x="0" y="0" width="13" height="1"/><rect x="0" y="12" width="13" height="1"/><rect x="0" y="0" width="1" height="13"/><rect x="12" y="0" width="1" height="13"/><rect x="4" y="0" width="1" height="13"/><rect x="8" y="0" width="1" height="13"/><rect x="0" y="4" width="13" height="1"/><rect x="0" y="8" width="13" height="1"/></g><rect x="1" y="1" width="3" height="2" fill="#1d99f3"/></svg>
<div class="t" style="left:111.50px;top:456.32px;font-size:13.33px;color:#fcfcfc;font-weight:normal;">Toy Dataset - Kopie</div>
<div style="left:46px;top:475px;width:371px;height:26px;background:#1e2023;"></div>
<div style="left:75px;top:475px;width:1px;height:6px;background:#5f6265;"></div>
<div style="left:75px;top:493px;width:1px;height:8px;background:#5f6265;"></div>
<div style="left:81px;top:487px;width:5px;height:1px;background:#5f6265;"></div>
<svg style="position:absolute;left:70px;top:485px;" width="11" height="7" viewBox="0 0 11 7"><path d="M0.5 0.5 L5.5 5.5 L10.5 0.5" fill="none" stroke="#eff0f1" stroke-width="1.1"/></svg>
<svg style="position:absolute;left:90px;top:481px;" width="15" height="15" viewBox="0 0 15 15"><circle cx="7.5" cy="7.5" r="6.8" fill="#2b3036" stroke="#4a4f55" stroke-width="1"/><path d="M7 3.5 V8 H10" fill="none" stroke="#3daee9" stroke-width="1.2"/></svg>
<div class="t" style="left:111.50px;top:482.32px;font-size:13.33px;color:#fcfcfc;font-weight:normal;">Seasonal Decomposition for Passengers</div>
<div style="left:46px;top:501px;width:371px;height:26px;background:#141618;"></div>
<div style="left:75px;top:501px;width:1px;height:26px;background:#5f6265;"></div>
<div style="left:95px;top:501px;width:1px;height:6px;background:#5f6265;"></div>
<div style="left:95px;top:519px;width:1px;height:8px;background:#5f6265;"></div>
<div style="left:101px;top:513px;width:5px;height:1px;background:#5f6265;"></div>
<svg style="position:absolute;left:90px;top:511px;" width="11" height="7" viewBox="0 0 11 7"><path d="M0.5 0.5 L5.5 5.5 L10.5 0.5" fill="none" stroke="#eff0f1" stroke-width="1.1"/></svg>
<svg style="position:absolute;left:111px;top:508px;" width="13" height="13" viewBox="0 0 13 13"><g fill="#fcfcfc"><rect x="0" y="0" width="13" height="1"/><rect x="0" y="12" width="13" height="1"/><rect x="0" y="0" width="1" height="13"/><rect x="12" y="0" width="1" height="13"/><rect x="4" y="0" width="1" height="13"/><rect x="8" y="0" width="1" height="13"/><rect x="0" y="4" width="13" height="1"/><rect x="0" y="8" width="13" height="1"/></g><rect x="1" y="1" width="3" height="2" fill="#1d99f3"/></svg>
<div class="t" style="left:131.50px;top:508.32px;font-size:13.33px;color:#fcfcfc;font-weight:normal;">Result</div>
<div style="left:46px;top:527px;width:371px;height:26px;background:#1e2023;"></div>
<div style="left:75px;top:527px;width:1px;height:26px;background:#5f6265;"></div>
<div style="left:95px;top:527px;width:1px;height:26px;background:#5f6265;"></div>
<div style="left:115px;top:527px;width:1px;height:26px;background:#5f6265;"></div>
<div style="left:115px;top:539px;width:11px;height:1px;background:#5f6265;"></div>
<svg style="position:absolute;left:131px;top:534px;" width="13" height="13" viewBox="0 0 13 13"><g stroke="#fcfcfc" stroke-width="1.2" shape-rendering="crispEdges"><path d="M0 1.5 H12 M0 4.5 H9 M0 7.5 H12 M0 10.5 H8 M10 12 H12"/></g></svg>
<div class="t" style="left:151.50px;top:534.32px;font-size:13.33px;color:#fcfcfc;font-weight:normal;">Trend</div>
<div style="left:46px;top:553px;width:371px;height:26px;background:#141618;"></div>
<div style="left:75px;top:553px;width:1px;height:26px;background:#5f6265;"></div>
<div style="left:95px;top:553px;width:1px;height:26px;background:#5f6265;"></div>
<div style="left:115px;top:553px;width:1px;height:26px;background:#5f6265;"></div>
<div style="left:115px;top:565px;width:11px;height:1px;background:#5f6265;"></div>
<svg style="position:absolute;left:131px;top:560px;" width="13" height="13" viewBox="0 0 13 13"><g stroke="#fcfcfc" stroke-width="1.2" shape-rendering="crispEdges"><path d="M0 1.5 H12 M0 4.5 H9 M0 7.5 H12 M0 10.5 H8 M10 12 H12"/></g></svg>
<div class="t" style="left:151.50px;top:560.32px;font-size:13.33px;color:#fcfcfc;font-weight:normal;">Seasonal</div>
<div style="left:46px;top:579px;width:371px;height:26px;background:#1e2023;"></div>
<div style="left:75px;top:579px;width:1px;height:26px;background:#5f6265;"></div>
<div style="left:95px;top:579px;width:1px;height:26px;background:#5f6265;"></div>
<div style="left:115px;top:579px;width:1px;height:13px;background:#5f6265;"></div>
<div style="left:115px;top:591px;width:11px;height:1px;background:#5f6265;"></div>
<svg style="position:absolute;left:131px;top:586px;" width="13" height="13" viewBox="0 0 13 13"><g stroke="#fcfcfc" stroke-width="1.2" shape-rendering="crispEdges"><path d="M0 1.5 H12 M0 4.5 H9 M0 7.5 H12 M0 10.5 H8 M10 12 H12"/></g></svg>
<div class="t" style="left:151.50px;top:586.32px;font-size:13.33px;color:#fcfcfc;font-weight:normal;">Residual</div>
<div style="left:46px;top:605px;width:371px;height:26px;background:#141618;"></div>
<div style="left:75px;top:605px;width:1px;height:26px;background:#5f6265;"></div>
<div style="left:95px;top:605px;width:1px;height:6px;background:#5f6265;"></div>
<div style="left:101px;top:617px;width:5px;height:1px;background:#5f6265;"></div>
<svg style="position:absolute;left:93px;top:612px;" width="7" height="11" viewBox="0 0 7 11"><path d="M0.5 0.5 L5.5 5.5 L0.5 10.5" fill="none" stroke="#eff0f1" stroke-width="1.1"/></svg>
<svg style="position:absolute;left:110px;top:611px;" width="15" height="14" viewBox="0 0 15 14"><g fill="none" stroke="#e0e0e0" stroke-width="1.1" stroke-linejoin="round"><path d="M2.6 12.9 H0.8 V4 L3.5 1.3"/><path d="M4.6 12.9 V1.3 H13.9 V4 L10 7.6 L13 10.6 V12.9 Z"/><path d="M5 9.5 L8 6 L10 7.5 L13.5 4"/></g><path d="M0.8 4 L3.5 1.3 V4 Z" fill="#e0e0e0"/></svg>
<div class="t" style="left:131.50px;top:612.32px;font-size:13.33px;color:#fcfcfc;font-weight:normal;">Worksheet</div>
<div style="left:46px;top:631px;width:371px;height:26px;background:#1e2023;"></div>
<div style="left:86px;top:631px;width:331px;height:26px;background:#1b3e52;"></div>
<div style="left:75px;top:631px;width:1px;height:6px;background:#5f6265;"></div>
<div style="left:81px;top:643px;width:5px;height:1px;background:#5f6265;"></div>
<svg style="position:absolute;left:70px;top:641px;" width="11" height="7" viewBox="0 0 11 7"><path d="M0.5 0.5 L5.5 5.5 L10.5 0.5" fill="none" stroke="#eff0f1" stroke-width="1.1"/></svg>
<svg style="position:absolute;left:90px;top:637px;" width="15" height="14" viewBox="0 0 15 14"><g fill="none" stroke="#e0e0e0" stroke-width="1.1" stroke-linejoin="round"><path d="M2.6 12.9 H0.8 V4 L3.5 1.3"/><path d="M4.6 12.9 V1.3 H13.9 V4 L10 7.6 L13 10.6 V12.9 Z"/><path d="M5 9.5 L8 6 L10 7.5 L13.5 4"/></g><path d="M0.8 4 L3.5 1.3 V4 Z" fill="#e0e0e0"/></svg>
<div class="t" style="left:111.50px;top:638.32px;font-size:13.33px;color:#fcfcfc;font-weight:normal;">Worksheet - Passengers</div>
<div style="left:46px;top:657px;width:371px;height:26px;background:#141618;"></div>
<div style="left:95px;top:657px;width:1px;height:6px;background:#5f6265;"></div>
<div style="left:101px;top:669px;width:5px;height:1px;background:#5f6265;"></div>
<svg style="position:absolute;left:90px;top:667px;" width="11" height="7" viewBox="0 0 11 7"><path d="M0.5 0.5 L5.5 5.5 L10.5 0.5" fill="none" stroke="#eff0f1" stroke-width="1.1"/></svg>
<svg style="position:absolute;left:111px;top:664px;" width="13" height="13" viewBox="0 0 13 13"><g fill="none" stroke="#fcfcfc" stroke-width="1.1"><path d="M0.6 0 V12.4 H12.4 M0.6 8 L4 4.5 L8 10 L12 3"/><path d="M9 2 L12 0.6"/></g></svg>
<div class="t" style="left:131.50px;top:664.32px;font-size:13.33px;color:#fcfcfc;font-weight:normal;">Plot Area - Passengers</div>
<div style="left:46px;top:683px;width:371px;height:26px;background:#1e2023;"></div>
<div style="left:115px;top:683px;width:1px;height:26px;background:#5f6265;"></div>
<div style="left:115px;top:695px;width:11px;height:1px;background:#5f6265;"></div>
<svg style="position:absolute;left:131px;top:690px;" width="13" height="13" viewBox="0 0 13 13"><g fill="none" stroke="#fcfcfc" stroke-width="1.1" shape-rendering="crispEdges"><path d="M0.5 0 V12.5 H12 M4.5 10 V12 M7.5 10 V12 M10.5 10 V12"/></g></svg>
<div class="t" style="left:151.50px;top:690.32px;font-size:13.33px;color:#fcfcfc;font-weight:normal;">x</div>
<div style="left:46px;top:709px;width:371px;height:26px;background:#141618;"></div>
<div style="left:115px;top:709px;width:1px;height:26px;background:#5f6265;"></div>
<div style="left:115px;top:721px;width:11px;height:1px;background:#5f6265;"></div>
<svg style="position:absolute;left:131px;top:716px;" width="13" height="13" viewBox="0 0 13 13"><g fill="none" stroke="#fcfcfc" stroke-width="1.1" shape-rendering="crispEdges"><path d="M0.5 0 V12.5 H12 M4.5 10 V12 M7.5 10 V12 M10.5 10 V12"/></g></svg>
<div class="t" style="left:151.50px;top:716.32px;font-size:13.33px;color:#fcfcfc;font-weight:normal;">x2</div>
<div style="left:46px;top:735px;width:371px;height:26px;background:#1e2023;"></div>
<div style="left:115px;top:735px;width:1px;height:26px;background:#5f6265;"></div>
<div style="left:115px;top:747px;width:11px;height:1px;background:#5f6265;"></div>
<svg style="position:absolute;left:131px;top:742px;" width="13" height="13" viewBox="0 0 13 13"><g fill="none" stroke="#fcfcfc" stroke-width="1.1" shape-rendering="crispEdges"><path d="M0.5 0 V12.5 H12 M0.5 2.5 H2.5 M0.5 5.5 H2.5 M0.5 8.5 H2.5"/></g></svg>
<div class="t" style="left:151.50px;top:742.32px;font-size:13.33px;color:#fcfcfc;font-weight:normal;">y</div>
<div style="left:46px;top:761px;width:371px;height:26px;background:#141618;"></div>
<div style="left:115px;top:761px;width:1px;height:26px;background:#5f6265;"></div>
<div style="left:115px;top:773px;width:11px;height:1px;background:#5f6265;"></div>
<svg style="position:absolute;left:131px;top:768px;" width="13" height="13" viewBox="0 0 13 13"><g fill="none" stroke="#fcfcfc" stroke-width="1.1" shape-rendering="crispEdges"><path d="M0.5 0 V12.5 H12 M0.5 2.5 H2.5 M0.5 5.5 H2.5 M0.5 8.5 H2.5"/></g></svg>
<div class="t" style="left:151.50px;top:768.32px;font-size:13.33px;color:#fcfcfc;font-weight:normal;">y2</div>
<div style="left:46px;top:787px;width:371px;height:26px;background:#1e2023;"></div>
<div style="left:115px;top:787px;width:1px;height:26px;background:#5f6265;"></div>
<div style="left:115px;top:799px;width:11px;height:1px;background:#5f6265;"></div>
<svg style="position:absolute;left:131px;top:794px;" width="13" height="13" viewBox="0 0 13 13"><g fill="none" stroke="#fcfcfc" stroke-width="1.1"><path d="M0.5 0 V12.5 H12 M1 3 L5 10 L12 4" /></g></svg>
<div class="t" style="left:151.50px;top:794.32px;font-size:13.33px;color:#fcfcfc;font-weight:normal;">original</div>
<div style="left:46px;top:813px;width:371px;height:26px;background:#141618;"></div>
<div style="left:115px;top:813px;width:1px;height:26px;background:#5f6265;"></div>
<div style="left:115px;top:825px;width:11px;height:1px;background:#5f6265;"></div>
<svg style="position:absolute;left:131px;top:820px;" width="13" height="13" viewBox="0 0 13 13"><g fill="none" stroke="#fcfcfc" stroke-width="1.1"><path d="M0.5 0 V12.5 H12 M1 3 L5 10 L12 4" /></g></svg>
<div class="t" style="left:151.50px;top:820.32px;font-size:13.33px;color:#fcfcfc;font-weight:normal;">deseasonalized</div>
<div style="left:46px;top:839px;width:371px;height:26px;background:#1e2023;"></div>
<div style="left:115px;top:839px;width:1px;height:13px;background:#5f6265;"></div>
<div style="left:115px;top:851px;width:11px;height:1px;background:#5f6265;"></div>
<svg style="position:absolute;left:131px;top:846px;" width="13" height="14" viewBox="0 0 13 14"><g fill="none" stroke="#fcfcfc" stroke-width="1.2" shape-rendering="crispEdges"><path d="M0 0.5 H5 M2.5 0.5 V13 M0 13 H5 M5.5 10 V11.5 H12 V10"/></g></svg>
<div class="t" style="left:151.50px;top:846.32px;font-size:13.33px;color:#fcfcfc;font-weight:normal;">Legend</div>
<div style="left:46px;top:1222px;width:371px;height:1px;background:#3a3d40;"></div>
<div style="left:46px;top:1223px;width:371px;height:20px;background:#161719;"></div>
<div style="left:49px;top:1229px;width:250px;height:8px;background:#4b4e52;border-radius:4px;"></div>
<div style="left:417px;top:104px;width:1px;height:1139px;background:#101214;"></div>
<div style="left:1288px;top:104px;width:1px;height:1139px;background:#101214;"></div>
<div style="left:418px;top:104px;width:870px;height:1139px;background:#202326;"></div>
<div style="left:418px;top:104px;width:870px;height:1px;background:#2c3034;"></div>
<div style="left:418px;top:105px;width:870px;height:21px;background:#1d1f22;"></div>
<div style="left:418px;top:126px;width:870px;height:3px;background:#393d42;"></div>
<div class="t" style="left:428.00px;top:109.72px;font-size:13.33px;color:#373a3e;font-weight:normal;">Pa...</div>
<svg style="position:absolute;left:462px;top:112px;" width="9" height="9" viewBox="0 0 9 9"><path d="M0.6 0.6 L8.4 8.4 M8.4 0.6 L0.6 8.4" stroke="#0c0d0e" stroke-width="1.1"/></svg>
<div style="left:481px;top:107px;width:1px;height:19px;background:#2c3034;"></div>
<div class="t" style="left:494.00px;top:109.72px;font-size:13.33px;color:#373a3e;font-weight:normal;">CO2</div>
<svg style="position:absolute;left:529px;top:112px;" width="9" height="9" viewBox="0 0 9 9"><path d="M0.6 0.6 L8.4 8.4 M8.4 0.6 L0.6 8.4" stroke="#0c0d0e" stroke-width="1.1"/></svg>
<div style="left:548px;top:107px;width:1px;height:19px;background:#2c3034;"></div>
<div class="t" style="left:560.50px;top:109.72px;font-size:13.33px;color:#373a3e;font-weight:normal;">Electrici...</div>
<svg style="position:absolute;left:627px;top:112px;" width="9" height="9" viewBox="0 0 9 9"><path d="M0.6 0.6 L8.4 8.4 M8.4 0.6 L0.6 8.4" stroke="#0c0d0e" stroke-width="1.1"/></svg>
<div style="left:646px;top:107px;width:1px;height:19px;background:#2c3034;"></div>
<div class="t" style="left:659.50px;top:109.72px;font-size:13.33px;color:#373a3e;font-weight:normal;">Toy Dataset - ...</div>
<svg style="position:absolute;left:762px;top:112px;" width="9" height="9" viewBox="0 0 9 9"><path d="M0.6 0.6 L8.4 8.4 M8.4 0.6 L0.6 8.4" stroke="#0c0d0e" stroke-width="1.1"/></svg>
<div style="left:782px;top:107px;width:1px;height:19px;background:#2c3034;"></div>
<div class="t" style="left:796.00px;top:109.72px;font-size:13.33px;color:#373a3e;font-weight:normal;">Worksheet - ...</div>
<svg style="position:absolute;left:893px;top:112px;" width="9" height="9" viewBox="0 0 9 9"><path d="M0.6 0.6 L8.4 8.4 M8.4 0.6 L0.6 8.4" stroke="#0c0d0e" stroke-width="1.1"/></svg>
<div style="left:913px;top:107px;width:1px;height:19px;background:#2c3034;"></div>
<div class="t" style="left:926.50px;top:109.72px;font-size:13.33px;color:#373a3e;font-weight:normal;">Toy Dat...</div>
<svg style="position:absolute;left:992px;top:112px;" width="9" height="9" viewBox="0 0 9 9"><path d="M0.6 0.6 L8.4 8.4 M8.4 0.6 L0.6 8.4" stroke="#0c0d0e" stroke-width="1.1"/></svg>
<div style="left:1012px;top:107px;width:1px;height:19px;background:#2c3034;"></div>
<div class="t" style="left:1023.00px;top:109.72px;font-size:13.33px;color:#373a3e;font-weight:normal;">Wo...</div>
<svg style="position:absolute;left:1061px;top:112px;" width="9" height="9" viewBox="0 0 9 9"><path d="M0.6 0.6 L8.4 8.4 M8.4 0.6 L0.6 8.4" stroke="#0c0d0e" stroke-width="1.1"/></svg>
<div style="left:1080px;top:107px;width:1px;height:19px;background:#2c3034;"></div>
<div style="left:1081px;top:107px;width:131px;height:22px;background:linear-gradient(#2c3035,#343840);"></div>
<div class="t" style="left:1093.50px;top:109.72px;font-size:13.33px;color:#fcfcfc;font-weight:normal;">Worksheet - ...</div>
<svg style="position:absolute;left:1191px;top:111px;" width="9" height="9" viewBox="0 0 9 9"><path d="M0.6 0.6 L8.4 8.4 M8.4 0.6 L0.6 8.4" stroke="#fcfcfc" stroke-width="1.1"/></svg>
<svg style="position:absolute;left:1218px;top:113px;" width="9" height="5" viewBox="0 0 9 5"><path d="M0 0 H9 L4.5 5 Z" fill="#fcfcfc"/></svg>
<svg style="position:absolute;left:1235px;top:110px;" width="10" height="10" viewBox="0 0 10 10"><g fill="none" stroke="#fcfcfc" stroke-width="1.3"><rect x="0.7" y="3.7" width="5.6" height="5.6"/><path d="M3.5 3.5 V0.7 H9.3 V6.3 H6.5"/></g></svg>
<svg style="position:absolute;left:1255px;top:110px;" width="9" height="11" viewBox="0 0 9 11"><g fill="#fcfcfc"><rect x="1.5" y="0" width="6" height="1.3"/><rect x="2.5" y="0" width="1.3" height="7"/><rect x="5.2" y="0" width="1.3" height="7"/><rect x="0" y="6" width="9" height="1.3"/><rect x="3.8" y="7" width="1.3" height="4"/></g></svg>
<svg style="position:absolute;left:1273px;top:110px;" width="10" height="10" viewBox="0 0 10 10"><path d="M0.7 0.7 L9.3 9.3 M9.3 0.7 L0.7 9.3" stroke="#fcfcfc" stroke-width="1.2"/></svg>
<div style="left:418px;top:248px;width:870px;height:1px;background:#0d0f11;"></div>
<div style="left:418px;top:249px;width:870px;height:870px;background:#ffffff;"></div>
<div style="left:418px;top:1119px;width:870px;height:1px;background:#0d0f11;"></div>
<svg style="position:absolute;left:418px;top:249px;" width="870" height="870" viewBox="0 0 870 870"><path d="M130.5 43.30000000000001 V739.5 H826.5" fill="none" stroke="#6b6b6b" stroke-width="1.15"/><polyline points="130.40,715.10 135.26,717.50 140.13,714.20 144.99,708.90 149.86,708.00 154.72,707.80 159.58,709.70 164.45,706.60 169.31,708.70 174.18,702.81 179.04,701.40 183.90,704.90 188.77,708.50 193.63,702.09 198.50,702.81 203.36,698.99 208.22,703.91 213.09,693.60 217.95,685.60 222.82,685.10 227.68,678.21 232.54,682.21 237.41,682.59 242.27,671.50 247.14,665.61 252.00,663.99 256.86,653.41 261.73,658.90 266.59,643.90 271.46,658.51 276.32,652.40 281.18,654.10 286.05,643.30 290.91,641.30 295.78,633.60 300.64,632.40 305.50,628.50 310.37,617.80 315.23,634.40 320.10,635.20 324.96,626.50 329.82,609.09 334.69,617.40 339.55,604.40 344.42,610.30 349.28,600.50 354.14,593.79 359.01,590.60 363.87,591.41 368.74,585.70 373.60,573.10 378.46,564.40 383.33,571.50 388.19,581.80 393.06,585.70 397.92,573.91 402.78,574.30 407.65,571.10 412.51,575.10 417.38,576.60 422.24,577.01 427.10,586.11 431.97,569.89 436.83,573.50 441.70,562.79 446.56,561.80 451.42,553.15 456.29,555.31 461.15,549.40 466.02,543.50 470.88,533.20 475.74,533.61 480.61,523.00 485.47,517.01 490.34,521.80 495.20,511.50 500.06,511.10 504.93,504.00 509.79,488.21 514.66,495.69 519.52,483.50 524.38,477.20 529.25,477.60 534.11,461.21 538.98,460.49 543.84,449.80 548.70,450.20 553.57,445.50 558.43,442.30 563.30,436.00 568.16,439.30 573.02,438.40 577.89,430.50 582.75,430.50 587.62,422.60 592.48,416.70 597.34,412.30 602.21,407.61 607.07,395.00 611.94,391.05 616.80,390.29 621.66,379.71 626.53,384.00 631.39,379.71 636.26,366.70 641.12,371.80 645.98,368.20 650.85,367.40 655.71,373.80 660.58,375.30 665.44,375.71 670.30,390.29 675.17,384.00 680.03,365.49 684.90,367.40 689.76,346.50 694.62,361.60 699.49,355.29 704.35,352.60 709.22,359.70 714.08,341.90 718.94,333.21 723.81,303.60 728.67,325.70 733.54,309.89 738.40,318.99 743.26,309.51 748.13,290.56 752.99,287.95 757.86,291.00 762.72,273.10 767.58,261.01 772.45,261.60 777.31,258.29 782.18,273.41 787.04,239.80 791.90,243.60 796.77,237.00 801.63,230.30 806.50,244.00 811.36,227.90 816.22,218.71 821.09,224.01 825.95,218.30" fill="none" stroke="#80877e" stroke-width="1.05" stroke-linejoin="miter"/><polyline points="130.40,728.20 135.26,720.14 140.13,701.36 144.99,705.38 149.86,716.12 154.72,697.33 159.58,679.88 164.45,679.88 169.31,695.99 174.18,718.80 179.04,738.93 183.90,720.14 188.77,724.17 193.63,709.41 198.50,689.28 203.36,697.33 208.22,710.75 213.09,678.54 217.95,650.36 222.82,650.36 227.68,666.46 232.54,700.01 237.41,725.51 242.27,690.62 247.14,683.91 252.00,677.20 256.86,639.62 261.73,659.75 266.59,647.68 271.46,639.62 276.32,611.44 281.18,611.44 286.05,631.57 290.91,661.10 295.78,682.57 300.64,655.73 305.50,649.02 310.37,636.94 315.23,619.49 320.10,635.60 324.96,632.91 329.82,585.94 334.69,569.84 339.55,553.74 344.42,598.02 349.28,622.18 354.14,647.68 359.01,618.15 363.87,615.47 368.74,615.47 373.60,561.79 378.46,563.13 383.33,571.18 388.19,552.39 393.06,524.21 397.92,513.48 402.78,560.45 407.65,595.34 412.51,636.94 417.38,608.76 422.24,604.73 427.10,626.20 431.97,563.13 436.83,573.87 441.70,564.47 446.56,524.21 451.42,473.22 456.29,485.29 461.15,530.92 466.02,571.18 470.88,606.07 475.74,571.18 480.61,553.74 485.47,565.81 490.34,520.19 495.20,517.50 500.06,516.16 504.93,455.77 509.79,390.01 514.66,412.83 519.52,459.80 524.38,510.79 529.25,560.45 534.11,505.42 538.98,497.37 543.84,506.77 548.70,453.09 553.57,458.45 558.43,451.74 563.30,376.59 568.16,324.25 573.02,334.99 577.89,402.09 582.75,467.85 587.62,514.82 592.48,467.85 597.34,455.77 602.21,474.56 607.07,400.75 611.94,411.48 616.80,402.09 621.66,312.18 626.53,254.47 631.39,251.79 636.26,336.33 641.12,412.83 645.98,469.19 650.85,427.59 655.71,422.22 660.58,451.74 665.44,392.70 670.30,411.48 675.17,391.35 680.03,294.73 684.90,219.58 689.76,200.79 694.62,336.33 699.49,396.72 704.35,462.48 709.22,426.25 714.08,395.38 718.94,419.54 723.81,333.65 728.67,347.07 733.54,314.86 738.40,245.08 743.26,143.08 748.13,128.32 752.99,257.15 757.86,332.31 762.72,392.70 767.58,334.99 772.45,318.89 777.31,353.78 782.18,316.20 787.04,259.84 791.90,245.08 796.77,160.53 801.63,43.78 806.50,65.25 811.36,196.76 816.22,259.84 821.09,355.12 825.95,298.76" fill="none" stroke="#262626" stroke-width="1.0" stroke-linejoin="miter"/><path d="M179.29999999999995 93.5 H267" stroke="#666" stroke-width="1.4"/><path d="M179.29999999999995 128.5 H267" stroke="#838a82" stroke-width="1.4"/></svg>
<div class="t" style="left:-467.50px;width:1000px;text-align:right;top:914.44px;font-size:25.3px;color:#636363;font-weight:normal;">150</div>
<div class="t" style="left:-467.50px;width:1000px;text-align:right;top:847.34px;font-size:25.3px;color:#636363;font-weight:normal;">200</div>
<div class="t" style="left:-467.50px;width:1000px;text-align:right;top:780.24px;font-size:25.3px;color:#636363;font-weight:normal;">250</div>
<div class="t" style="left:-467.50px;width:1000px;text-align:right;top:713.14px;font-size:25.3px;color:#636363;font-weight:normal;">300</div>
<div class="t" style="left:-467.50px;width:1000px;text-align:right;top:646.04px;font-size:25.3px;color:#636363;font-weight:normal;">350</div>
<div class="t" style="left:-467.50px;width:1000px;text-align:right;top:578.94px;font-size:25.3px;color:#636363;font-weight:normal;">400</div>
<div class="t" style="left:-467.50px;width:1000px;text-align:right;top:511.84px;font-size:25.3px;color:#636363;font-weight:normal;">450</div>
<div class="t" style="left:-467.50px;width:1000px;text-align:right;top:444.74px;font-size:25.3px;color:#636363;font-weight:normal;">500</div>
<div class="t" style="left:-467.50px;width:1000px;text-align:right;top:377.64px;font-size:25.3px;color:#636363;font-weight:normal;">550</div>
<div class="t" style="left:-467.50px;width:1000px;text-align:right;top:310.54px;font-size:25.3px;color:#636363;font-weight:normal;">600</div>
<div class="t" style="left:140.52px;width:1000px;text-align:center;top:1018.78px;font-size:25.3px;color:#636363;font-weight:normal;">20</div>
<div class="t" style="left:237.80px;width:1000px;text-align:center;top:1018.78px;font-size:25.3px;color:#636363;font-weight:normal;">40</div>
<div class="t" style="left:335.08px;width:1000px;text-align:center;top:1018.78px;font-size:25.3px;color:#636363;font-weight:normal;">60</div>
<div class="t" style="left:432.36px;width:1000px;text-align:center;top:1018.78px;font-size:25.3px;color:#636363;font-weight:normal;">80</div>
<div class="t" style="left:529.64px;width:1000px;text-align:center;top:1018.78px;font-size:25.3px;color:#636363;font-weight:normal;">100</div>
<div class="t" style="left:626.92px;width:1000px;text-align:center;top:1018.78px;font-size:25.3px;color:#636363;font-weight:normal;">120</div>
<div class="t" style="left:724.20px;width:1000px;text-align:center;top:1018.78px;font-size:25.3px;color:#636363;font-weight:normal;">140</div>
<div class="t" style="left:396.50px;width:1000px;text-align:center;top:1061.60px;font-size:34.5px;color:#636363;font-weight:normal;">index</div>
<div class="t" style="left:-29.20px;top:610.60px;width:1000px;text-align:center;font-size:34.5px;color:#636363;transform-origin:500px 29.20px;transform:rotate(-90deg);">passengers</div>
<div class="t" style="left:694.00px;top:335.41px;font-size:25.5px;color:#000000;font-weight:normal;letter-spacing:0.55px;">original</div>
<div class="t" style="left:694.00px;top:369.71px;font-size:25.5px;color:#5a6257;font-weight:normal;letter-spacing:-0.15px;">deseasonalized</div>
<div style="left:1289px;top:104px;width:447px;height:1139px;background:#393d44;"></div>
<div style="left:1289px;top:104px;width:447px;height:24px;background:#1c1e21;"></div>
<div style="left:1289px;top:104px;width:173px;height:24px;background:linear-gradient(#30343a,#3a3e45);"></div>
<div class="t" style="left:1299.00px;top:107.72px;font-size:13.33px;color:#fcfcfc;font-weight:normal;">Properties: Worksheet</div>
<svg style="position:absolute;left:1442px;top:110px;" width="9" height="9" viewBox="0 0 9 9"><path d="M0.6 0.6 L8.4 8.4 M8.4 0.6 L0.6 8.4" stroke="#fcfcfc" stroke-width="1.1"/></svg>
<svg style="position:absolute;left:1665px;top:112px;" width="9" height="5" viewBox="0 0 9 5"><path d="M0 0 H9 L4.5 5 Z" fill="#fcfcfc"/></svg>
<svg style="position:absolute;left:1684px;top:109px;" width="10" height="10" viewBox="0 0 10 10"><g fill="none" stroke="#fcfcfc" stroke-width="1.3"><rect x="0.7" y="3.7" width="5.6" height="5.6"/><path d="M3.5 3.5 V0.7 H9.3 V6.3 H6.5"/></g></svg>
<svg style="position:absolute;left:1703px;top:109px;" width="9" height="11" viewBox="0 0 9 11"><g fill="#fcfcfc"><rect x="1.5" y="0" width="6" height="1.3"/><rect x="2.5" y="0" width="1.3" height="7"/><rect x="5.2" y="0" width="1.3" height="7"/><rect x="0" y="6" width="9" height="1.3"/><rect x="3.8" y="7" width="1.3" height="4"/></g></svg>
<svg style="position:absolute;left:1721px;top:109px;" width="10" height="10" viewBox="0 0 10 10"><path d="M0.7 0.7 L9.3 9.3 M9.3 0.7 L0.7 9.3" stroke="#fcfcfc" stroke-width="1.2"/></svg>
<div style="left:1375px;top:133px;width:171px;height:31px;background:#1e2124;border-top-right-radius:5px;"></div>
<div style="left:1296px;top:163px;width:433px;height:1029px;background:#1e2124;border:1px solid #4d5157;border-radius:0 4px 4px 4px;box-sizing:border-box;"></div>
<div style="left:1296px;top:133px;width:80px;height:32px;background:#1e2124;border:1px solid #4d5157;border-bottom:none;border-radius:4px 4px 0 0;box-sizing:border-box;"></div>
<div style="left:1298px;top:133px;width:77px;height:2px;background:#1e4a60;border-radius:4px 4px 0 0;"></div>
<div class="t" style="left:1312.50px;top:142.22px;font-size:13.33px;color:#fcfcfc;font-weight:normal;">General</div>
<div class="t" style="left:1384.50px;top:142.22px;font-size:13.33px;color:#fcfcfc;font-weight:normal;">Background</div>
<div class="t" style="left:1485.50px;top:142.22px;font-size:13.33px;color:#fcfcfc;font-weight:normal;">Layout</div>
<div class="t" style="left:1300.50px;top:176.72px;font-size:13.33px;color:#fcfcfc;font-weight:normal;">Name:</div>
<div style="left:1378px;top:167px;width:347px;height:32px;background:#141618;border:1px solid #3e4246;border-radius:4px;box-sizing:border-box;"></div>
<div class="t" style="left:1386.00px;top:176.72px;font-size:13.33px;color:#fcfcfc;font-weight:normal;">Worksheet - Passengers</div>
<div class="t" style="left:1300.50px;top:214.22px;font-size:13.33px;color:#fcfcfc;font-weight:normal;">Comment:</div>
<div style="left:1378px;top:201px;width:347px;height:38px;background:#141618;border:1px solid #3e4246;border-radius:4px;box-sizing:border-box;"></div>
<div style="left:1541px;top:229px;width:20px;height:9px;background:#4d5054;"></div>
<div class="t" style="left:1300.50px;top:257.02px;font-size:13.33px;color:#fcfcfc;font-weight:bold;">Geometry</div>
<div class="t" style="left:1300.50px;top:284.02px;font-size:13.33px;color:#fcfcfc;font-weight:normal;">Size:</div>
<div style="left:1379px;top:275px;width:345px;height:30px;background:#292c30;border:1px solid #3e4246;border-radius:4px;box-sizing:border-box;"></div>
<div class="t" style="left:1385.50px;top:284.02px;font-size:13.33px;color:#fcfcfc;font-weight:normal;">Custom</div>
<svg style="position:absolute;left:1707px;top:287px;" width="12" height="7" viewBox="0 0 12 7"><path d="M0.5 0.5 L6 6 L11.5 0.5" fill="none" stroke="#fcfcfc" stroke-width="1.1"/></svg>
<div class="t" style="left:1300.50px;top:318.22px;font-size:13.33px;color:#fcfcfc;font-weight:normal;">Width:</div>
<div style="left:1378px;top:309px;width:347px;height:31px;background:#141618;border:1px solid #3e4246;border-radius:4px;box-sizing:border-box;"></div>
<div class="t" style="left:1386.00px;top:318.22px;font-size:13.33px;color:#fcfcfc;font-weight:normal;">10 cm</div>
<div class="t" style="left:1300.50px;top:352.12px;font-size:13.33px;color:#fcfcfc;font-weight:normal;">Height:</div>
<div style="left:1378px;top:343px;width:347px;height:31px;background:#141618;border:1px solid #3e4246;border-radius:4px;box-sizing:border-box;"></div>
<div class="t" style="left:1386.00px;top:352.12px;font-size:13.33px;color:#fcfcfc;font-weight:normal;">10 cm</div>
<svg style="position:absolute;left:1707px;top:316px;" width="12" height="17" viewBox="0 0 12 17"><path d="M0.5 5.5 L6 0.5 L11.5 5.5 M0.5 10.5 L6 16 L11.5 10.5" fill="none" stroke="#fcfcfc" stroke-width="1.1"/></svg>
<svg style="position:absolute;left:1707px;top:350px;" width="12" height="17" viewBox="0 0 12 17"><path d="M0.5 5.5 L6 0.5 L11.5 5.5 M0.5 10.5 L6 16 L11.5 10.5" fill="none" stroke="#fcfcfc" stroke-width="1.1"/></svg>
<div style="left:1296px;top:1202px;width:82px;height:32px;background:#25282c;border:1px solid #4d5157;border-radius:5px;box-sizing:border-box;"></div>
<div style="left:1307px;top:1212px;width:12px;height:12px;background:conic-gradient(from 0deg, #4bb84a, #c8d321 25%, #f59a1c 40%, #ee2a3a 55%, #c02d9d 75%, #3b7fd8 90%, #4bb84a);border-radius:50%;"></div>
<div class="t" style="left:1326.00px;top:1211.72px;font-size:13.33px;color:#fcfcfc;font-weight:normal;">Theme</div>
<div style="left:1451px;top:1202px;width:76px;height:32px;background:#25282c;border:1px solid #4d5157;border-radius:5px;box-sizing:border-box;"></div>
<svg style="position:absolute;left:1464px;top:1210px;" width="16" height="16" viewBox="0 0 16 16"><g fill="none" stroke="#fcfcfc" stroke-width="1" shape-rendering="crispEdges"><path d="M0.5 0.5 H9.5 L13.5 4.5 V15.5 H0.5 Z"/><path d="M9 0.5 H10 L14 4.5 V5 H9 Z" fill="#fcfcfc" stroke="none"/><circle cx="12" cy="13" r="2" fill="#fcfcfc" stroke="#25282c"/></g></svg>
<div class="t" style="left:1487.50px;top:1211.72px;font-size:13.33px;color:#fcfcfc;font-weight:normal;">Load</div>
<div style="left:1529px;top:1202px;width:75px;height:32px;background:#25282c;border:1px solid #4d5157;border-radius:5px;box-sizing:border-box;"></div>
<svg style="position:absolute;left:1541px;top:1210px;" width="16" height="16" viewBox="0 0 16 16"><g fill="none" stroke="#fcfcfc" stroke-width="1" shape-rendering="crispEdges"><path d="M0.5 0.5 H12.5 L15.5 3.5 V15.5 H0.5 Z"/><rect x="3.5" y="0.5" width="8" height="5"/><rect x="3.5" y="9.5" width="9" height="6"/><circle cx="13" cy="13" r="2.2" fill="#fcfcfc" stroke="#25282c"/></g></svg>
<div class="t" style="left:1565.50px;top:1211.72px;font-size:13.33px;color:#fcfcfc;font-weight:normal;">Save</div>
<div style="left:1606px;top:1202px;width:123px;height:32px;background:#25282c;border:1px solid #4d5157;border-radius:5px;box-sizing:border-box;"></div>
<svg style="position:absolute;left:1617px;top:1210px;" width="19" height="18" viewBox="0 0 19 18"><g fill="none" stroke="#fcfcfc" stroke-width="1" shape-rendering="crispEdges"><path d="M0.5 0.5 H12.5 L15.5 3.5 V15.5 H0.5 Z"/><rect x="3.5" y="0.5" width="8" height="5"/><rect x="3.5" y="9.5" width="9" height="6"/><path d="M9 16 L17 8 L18.5 9.5 L10.5 17.5 Z" fill="#25282c" shape-rendering="auto"/></g></svg>
<div class="t" style="left:1642.50px;top:1211.72px;font-size:13.33px;color:#fcfcfc;font-weight:normal;">Save Default</div>
<div style="left:0px;top:1244px;width:1736px;height:1px;background:#44484c;"></div>
<div style="left:0px;top:1245px;width:1736px;height:22px;background:#202326;"></div>
<div class="t" style="left:715.50px;width:1000px;text-align:right;top:1250.22px;font-size:13.33px;color:#fcfcfc;font-weight:normal;">Memory used 307 MB, peak 3694 MB</div>
</body></html>
